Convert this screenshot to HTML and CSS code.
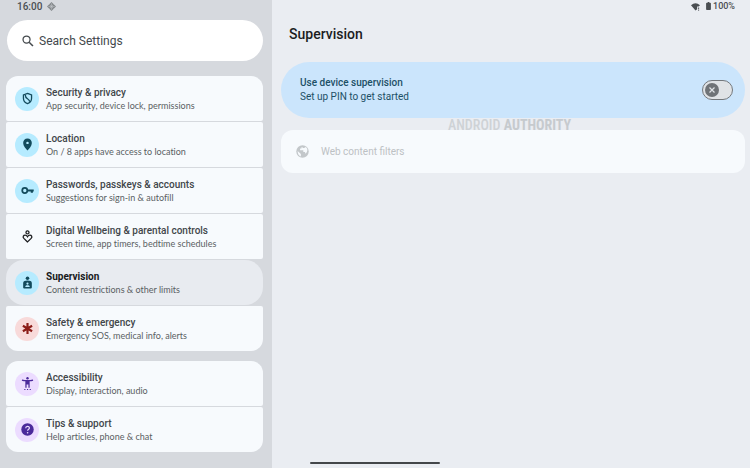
FILE: index.html
```
<!DOCTYPE html>
<html lang="en">
<head>
    <meta charset="UTF-8">
    <meta name="viewport" content="width=device-width, initial-scale=1.0">
    <title>Settings - Supervision</title>
    <link rel="stylesheet" href="styles.css">
</head>
<body>
    <div class="sidebar">
        <div class="status">
            <span>16:00</span>
            <svg class="status-icon" viewBox="0 0 10 10"><path d="M5 0l5 5-5 5-5-5z" fill="#85898c"/><path d="M3 3l4 4M7 3L3 7M5 1.5v7M1.5 5h7" stroke="#c5c9cc" stroke-width=".6"/></svg>
        </div>
        <label class="search">
            <svg viewBox="0 0 24 24"><circle cx="9.5" cy="9.5" r="6" fill="none" stroke="#44494d" stroke-width="2.2"/><path d="M14 14l6.5 6.5" stroke="#44494d" stroke-width="2.6"/></svg>
            <input type="text" placeholder="Search Settings" aria-label="Search Settings">
        </label>

        <nav>
            <div class="group">
                <a href="#" class="item">
                    <span class="icon blue"><svg viewBox="0 0 24 24"><path d="M12 2.5l7.500 3v6c0 4.800-3.200 8.500-7.500 10-4.300-1.500-7.500-5.200-7.500-10v-6z" fill="none" stroke="#124a5c" stroke-width="2.400"/><path d="M8 5.500c0 4 1.500 5.500 4 7s4 3 4 5.500" fill="none" stroke="#124a5c" stroke-width="2.400"/></svg></span>
                    <span class="text"><b>Security &amp; privacy</b><small>App security, device lock, permissions</small></span>
                </a>
                <a href="#" class="item">
                    <span class="icon blue"><svg viewBox="0 0 24 24"><path d="M12 1C7.300 1 4 4.500 4 9c0 5.500 5 10.500 8 14 3-3.500 8-8.500 8-14 0-4.500-3.300-8-8-8z" fill="#124a5c"/><circle cx="12" cy="9" r="2.300" fill="#b6ebff"/></svg></span>
                    <span class="text"><b>Location</b><small>On / 8 apps have access to location</small></span>
                </a>
                <a href="#" class="item">
                    <span class="icon blue"><svg viewBox="0 0 24 24"><circle cx="7" cy="12" r="4.700" fill="none" stroke="#124a5c" stroke-width="3.200"/><path d="M11 10.300h12.500v3.400h-1.500v2.500h-4v-2.500h-7z" fill="#124a5c"/></svg></span>
                    <span class="text"><b>Passwords, passkeys &amp; accounts</b><small>Suggestions for sign-in &amp; autofill</small></span>
                </a>
                <a href="#" class="item">
                    <span class="icon"><svg viewBox="0 0 24 24"><g fill="none" stroke="#1b1c1e" stroke-width="2.400"><circle cx="12" cy="4.500" r="2.800"/><path d="M12 22L5.300 15.500C2.500 12.500 4.500 9.500 7.500 9.500c2 0 3.500 1.200 4.500 3 1-1.800 2.500-3 4.500-3 3 0 5 3 2.200 6z"/></g></svg></span>
                    <span class="text"><b>Digital Wellbeing &amp; parental controls</b><small>Screen time, app timers, bedtime schedules</small></span>
                </a>
                <a href="#" class="item selected" aria-current="page">
                    <span class="icon blue"><svg viewBox="0 0 24 24"><circle cx="12" cy="4" r="3.300" fill="#124a5c"/><path d="M4 21v-8c0-3 3.500-4.500 8-4.500s8 1.500 8 4.500v8q0 2-2 2H6q-2 0-2-2z" fill="#124a5c"/><circle cx="12" cy="14" r="2" fill="#b6ebff"/><path d="M8 20.500v-1c0-1.700 2-2.300 4-2.300s4 .6 4 2.300v1z" fill="#b6ebff"/></svg></span>
                    <span class="text"><b>Supervision</b><small>Content restrictions &amp; other limits</small></span>
                </a>
                <a href="#" class="item">
                    <span class="icon red"><svg viewBox="0 0 24 24"><path d="M12 2v20M3.500 7l17 10M20.500 7l-17 10" stroke="#8c1d18" stroke-width="4"/></svg></span>
                    <span class="text"><b>Safety &amp; emergency</b><small>Emergency SOS, medical info, alerts</small></span>
                </a>
            </div>
            <div class="group">
                <a href="#" class="item">
                    <span class="icon purple"><svg viewBox="0 0 24 24"><g fill="#4b2a9b"><circle cx="12" cy="2.200" r="2.200"/><path d="M2 4.500c6 1.500 14 1.500 20 0l.5 2.200c-2.300.6-4.500 1-6.500 1.200V20h-2.300v-6h-3.400v6H8V7.900c-2-.2-4.200-.6-6.500-1.200z"/><path d="M6 22h2.200v2H6zM11 22h2.200v2H11zM16 22h2.200v2H16z"/></g></svg></span>
                    <span class="text"><b>Accessibility</b><small>Display, interaction, audio</small></span>
                </a>
                <a href="#" class="item">
                    <span class="icon purple"><svg viewBox="0 0 24 24"><circle cx="12" cy="12" r="11.500" fill="#4b2a9b"/><path d="M8.700 9.500c0-4.500 6.800-4.300 6.800-.5 0 2.500-3.300 2.700-3.300 5.500" fill="none" stroke="#ecdcff" stroke-width="2.200"/><circle cx="12.200" cy="18" r="1.500" fill="#ecdcff"/></svg></span>
                    <span class="text"><b>Tips &amp; support</b><small>Help articles, phone &amp; chat</small></span>
                </a>
            </div>
        </nav>
    </div>

    <main>
        <div class="status right">
            <svg class="status-icon" viewBox="0 0 10 10"><path d="M0 3.500Q5-.5 10 3.500L8.500 5H6.800v3L5 9.500z" fill="#4a4e52"/><path d="M8 6h1v2H8zM8 8.700h1v1H8z" fill="#4a4e52"/></svg>
            <svg class="battery" viewBox="0 0 6 10"><path d="M2 0h2v1h1q1 0 1 1v7q0 1-1 1H1q-1 0-1-1V2q0-1 1-1h1z" fill="#4a4e52"/></svg>
            <span>100%</span>
        </div>
        <h1>Supervision</h1>
        <div class="banner">
            <label for="supervision">
                <b>Use device supervision</b>
                <span>Set up PIN to get started</span>
            </label>
            <span class="switch">
                <input type="checkbox" id="supervision">
                <svg viewBox="0 0 14 14"><path d="M4.500 4.500l5 5M9.500 4.500l-5 5" stroke="#dfe2e5" stroke-width="1.200"/></svg>
            </span>
            <div class="watermark">ANDROID <b>AUTHORITY</b></div>
        </div>
        <button type="button" class="filters" disabled>
            <svg viewBox="0 0 24 24"><circle cx="12" cy="12" r="11.500" fill="#c3c7ca"/><path d="M3 11l6 5.500v4.800C5.500 20 3 16.500 3 11zM11 3.500c-1 .5-1 2-1 3H7.500v3h6v3.500h3l1 3c4-3.500 5-9 .5-12.500L15 5.500h-2z" fill="#f7fafd"/></svg>
            Web content filters
        </button>
    </main>
    <div class="gesture-bar"></div>
</body>
</html>
```
FILE: styles.css
```
* {
    box-sizing: border-box;
}
body {
    margin: 0;
    display: flex;
    min-height: 100vh;
    background-color: #eaedf2;
    font-family: "Roboto", "Noto Sans", sans-serif;
    font-size: 9px;
    color: #41464a;
}
b {
    font-weight: 500;
}
.sidebar {
    flex: 0 0 272px;
    padding: 0 9px 0 6px;
    background-color: #d6d9de;
}
.status {
    display: flex;
    align-items: center;
    gap: 5px;
    height: 12px;
    padding-left: 11px;
    font-size: 10px;
    font-weight: 500;
    color: #4a4e52;
}
.status-icon {
    width: 9px;
    height: 9px;
}
.right {
    justify-content: flex-end;
    padding-right: 10px;
    gap: 2px;
    font-size: 9px;
}
.battery {
    width: 5px;
    height: 8px;
    margin-left: 4px;
}

.search {
    display: flex;
    align-items: center;
    gap: 4px;
    height: 41px;
    margin: 8px 0 15px 1px;
    padding: 0 14px;
    border-radius: 21px;
    background-color: #fff;
}
.search svg {
    width: 14px;
    height: 14px;
}
.search input {
    flex: 1;
    min-width: 0;
    padding: 0;
    border: none;
    outline: none;
    background: none;
    font-family: inherit;
    font-size: 12px;
}
.search input::placeholder {
    color: #44494d;
    opacity: 1;
}

.group {
    display: flex;
    flex-direction: column;
    gap: 1px;
    margin-bottom: 10px;
}
.item {
    display: flex;
    align-items: center;
    gap: 7px;
    height: 45px;
    padding: 0 9px;
    border-radius: 2px;
    background-color: #f7fafd;
    color: inherit;
    text-decoration: none;
}
.item:first-child {
    border-top-left-radius: 12px;
    border-top-right-radius: 12px;
}
.item:last-child {
    border-bottom-left-radius: 12px;
    border-bottom-right-radius: 12px;
}
.item.selected {
    border-radius: 18px;
    background-color: #e8ebf0;
}
.icon {
    display: flex;
    align-items: center;
    justify-content: center;
    width: 24px;
    height: 24px;
    border-radius: 50%;
}
.icon svg {
    width: 13px;
    height: 13px;
}
.blue {
    background-color: #b6ebff;
}
.red {
    background-color: #f8dada;
}
.purple {
    background-color: #ecdcff;
}
.text b,
.text small {
    display: block;
    line-height: 13px;
}
.text b {
    font-size: 10px;
}
.text small {
    font-family: "Lato", "Roboto", sans-serif;
    font-size: 9px;
    font-variant-ligatures: none;
    color: #5a5f63;
}
.selected b {
    font-weight: 700;
    color: #17191b;
}

main {
    flex: 1;
    min-width: 0;
    padding: 0 5px 0 9px;
}
h1 {
    margin: 12px 8px 18px;
    font-size: 14px;
    line-height: 20px;
    font-weight: 500;
    color: #1b1d1f;
}
.banner {
    position: relative;
    display: flex;
    align-items: center;
    justify-content: space-between;
    height: 56px;
    padding: 0 12px 0 19px;
    border-radius: 28px;
    background-color: #cbe5fc;
    color: #1d5066;
}
.banner label {
    font-size: 10px;
    line-height: 14px;
}
.banner label b,
.banner label span {
    display: block;
}
.switch {
    position: relative;
    display: flex;
}
.switch input {
    appearance: none;
    width: 31px;
    height: 20px;
    margin: 0;
    padding: 2px;
    border: 1px solid #74787c;
    border-radius: 10px;
    background-color: #e0e3e6;
}
.switch input::before {
    content: "";
    display: block;
    width: 14px;
    height: 14px;
    border-radius: 50%;
    background-color: #6f7377;
}
.switch svg {
    position: absolute;
    left: 3px;
    top: 3px;
    width: 14px;
    height: 14px;
    pointer-events: none;
}
.watermark {
    position: absolute;
    left: 167px;
    top: 54px;
    font-family: "Roboto Condensed", "Open Sans Condensed", "Roboto", sans-serif;
    font-size: 14px;
    line-height: 18px;
    font-weight: 500;
    color: #ced2d6;
    white-space: nowrap;
}
.watermark b {
    font-weight: 700;
    color: #c6cace;
}
.filters {
    display: flex;
    align-items: center;
    gap: 12px;
    width: 100%;
    height: 43px;
    margin-top: 12px;
    padding: 0 15px;
    border: none;
    border-radius: 12px;
    background-color: #f7fafd;
    font-family: inherit;
    font-size: 10px;
    color: #bdc1c4;
}
.filters svg {
    width: 13px;
    height: 13px;
}
.gesture-bar {
    position: fixed;
    left: 50%;
    bottom: 4px;
    width: 130px;
    height: 2px;
    margin-left: -65px;
    border-radius: 1px;
    background-color: #44474a;
}
```
